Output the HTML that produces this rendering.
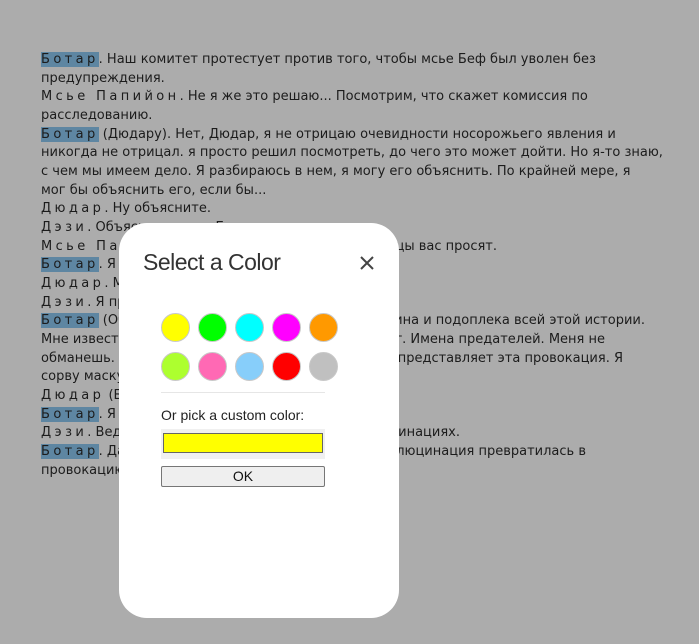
<!DOCTYPE html>
<html><head><meta charset="utf-8"><style>
html,body{margin:0;padding:0;}
body{width:699px;height:644px;background:#acacac;position:relative;overflow:hidden;font-family:"DejaVu Sans","Liberation Sans",sans-serif;font-size:13px;color:#1c1c1c;}
.l{position:absolute;left:41px;white-space:nowrap;line-height:19px;height:19px;}
.r{position:absolute;white-space:nowrap;line-height:19px;height:19px;}
.h{background:#5e86a2;}
.s{letter-spacing:3.4px;}
.dlg{position:absolute;left:119px;top:223px;width:280px;height:395px;background:#fff;border-radius:28px;font-family:"Liberation Sans",Arial,sans-serif;}
.t{position:absolute;left:24px;top:26px;font-size:23px;color:#333;letter-spacing:-0.5px;}
.x{position:absolute;left:240px;top:32px;}
.c{position:absolute;width:27px;height:27px;border-radius:50%;border:1px solid #c8c8c8;}
</style></head><body>
<div class="l" style="top:50px"><span class="h s">Ботар</span>. Наш комитет протестует против того, чтобы мсье Беф был уволен без</div>
<div class="l" style="top:69px">предупреждения.</div>
<div class="l" style="top:87px"><span class="s">Мсье Папийон</span>. Не я же это решаю... Посмотрим, что скажет комиссия по</div>
<div class="l" style="top:106px">расследованию.</div>
<div class="l" style="top:125px"><span class="h s">Ботар</span> (Дюдару). Нет, Дюдар, я не отрицаю очевидности носорожьего явления и</div>
<div class="l" style="top:143px">никогда не отрицал. я просто решил посмотреть, до чего это может дойти. Но я-то знаю,</div>
<div class="l" style="top:162px">с чем мы имеем дело. Я разбираюсь в нем, я могу его объяснить. По крайней мере, я</div>
<div class="l" style="top:181px">мог бы объяснить его, если бы...</div>
<div class="l" style="top:199px"><span class="s">Дюдар</span>. Ну объясните.</div>
<div class="l" style="top:218px"><span class="s">Дэзи</span>. Объясните, мсье Ботар.</div>
<div class="l" style="top:237px"><span class="s">Мсье Папийон</span>. Объясните.</div>
<div class="r" style="top:237px;right:202px">цы вас просят.</div>
<div class="l" style="top:255px"><span class="h s">Ботар</span>. Я объясню...</div>
<div class="l" style="top:274px"><span class="s">Дюдар</span>. Мы слушаем.</div>
<div class="l" style="top:293px"><span class="s">Дэзи</span>. Я просто сгораю от любопытства.</div>
<div class="l" style="top:311px"><span class="h s">Ботар</span> (Объяснит).</div>
<div class="r" style="top:311px;right:54px">ина и подоплека всей этой истории.</div>
<div class="l" style="top:330px">Мне известно, кто во всем.</div>
<div class="r" style="top:330px;right:94px">т. Имена предателей. Меня не</div>
<div class="l" style="top:349px">обманешь. Я раскрою.</div>
<div class="r" style="top:349px;right:76px">представляет эта провокация. Я</div>
<div class="l" style="top:367px">сорву маску с зачинщиков.</div>
<div class="l" style="top:386px"><span class="s">Дюдар</span> (Беранже).</div>
<div class="l" style="top:405px"><span class="h s">Ботар</span>. Я не позволю.</div>
<div class="l" style="top:423px"><span class="s">Дэзи</span>. Ведь только что.</div>
<div class="r" style="top:423px;right:239px">инациях.</div>
<div class="l" style="top:442px"><span class="h s">Ботар</span>. Да, и теперь.</div>
<div class="r" style="top:442px;right:113px">ллюцинация превратилась в</div>
<div class="l" style="top:461px">провокацию.</div>

<div class="dlg">
<div class="t">Select a Color</div>
<svg class="x" width="16" height="16" viewBox="0 0 16 16"><path d="M2 2L14 14M14 2L2 14" stroke="#444" stroke-width="2"/></svg>
<div class="c" style="left:42px;top:90px;background:#ffff00"></div>
<div class="c" style="left:79px;top:90px;background:#00ff00"></div>
<div class="c" style="left:116px;top:90px;background:#00ffff"></div>
<div class="c" style="left:153px;top:90px;background:#ff00ff"></div>
<div class="c" style="left:190px;top:90px;background:#ff9900"></div>
<div class="c" style="left:42px;top:129px;background:#adff2f"></div>
<div class="c" style="left:79px;top:129px;background:#ff69b4"></div>
<div class="c" style="left:116px;top:129px;background:#87cefa"></div>
<div class="c" style="left:153px;top:129px;background:#ff0000"></div>
<div class="c" style="left:190px;top:129px;background:#c0c0c0"></div>
<div style="position:absolute;left:42px;top:169px;width:164px;height:1px;background:#e6e6e6"></div>
<div style="position:absolute;left:42px;top:184px;font-size:14px;color:#222">Or pick a custom color:</div>
<div style="position:absolute;left:42px;top:206px;width:164px;height:30px;background:#f0f0f0"></div>
<div style="position:absolute;left:44px;top:210px;width:158px;height:18px;background:#ffff00;border:1px solid #666"></div>
<div style="position:absolute;left:42px;top:243px;width:162px;height:19px;background:#efefef;border:1px solid #767676;border-radius:2px;text-align:center;font-size:14px;line-height:19px;color:#111">OK</div>
</div>
</body></html>
